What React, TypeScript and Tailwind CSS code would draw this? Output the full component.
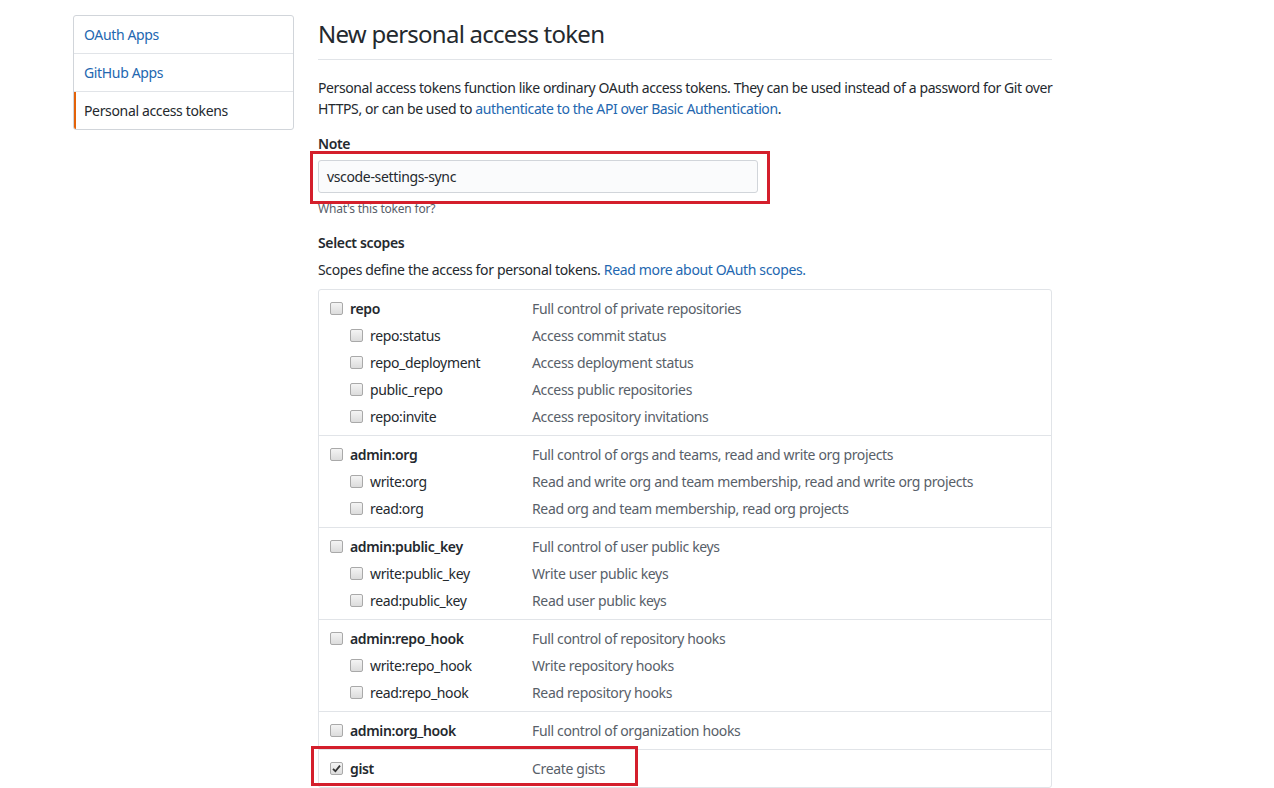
import React from 'react';

type Scope = {
  name: string;
  description: string;
  checked?: boolean;
  children?: { name: string; description: string }[];
};

const scopes: Scope[] = [
  {
    name: 'repo',
    description: 'Full control of private repositories',
    children: [
      { name: 'repo:status', description: 'Access commit status' },
      { name: 'repo_deployment', description: 'Access deployment status' },
      { name: 'public_repo', description: 'Access public repositories' },
      { name: 'repo:invite', description: 'Access repository invitations' },
    ],
  },
  {
    name: 'admin:org',
    description: 'Full control of orgs and teams, read and write org projects',
    children: [
      { name: 'write:org', description: 'Read and write org and team membership, read and write org projects' },
      { name: 'read:org', description: 'Read org and team membership, read org projects' },
    ],
  },
  {
    name: 'admin:public_key',
    description: 'Full control of user public keys',
    children: [
      { name: 'write:public_key', description: 'Write user public keys' },
      { name: 'read:public_key', description: 'Read user public keys' },
    ],
  },
  {
    name: 'admin:repo_hook',
    description: 'Full control of repository hooks',
    children: [
      { name: 'write:repo_hook', description: 'Write repository hooks' },
      { name: 'read:repo_hook', description: 'Read repository hooks' },
    ],
  },
  { name: 'admin:org_hook', description: 'Full control of organization hooks' },
  { name: 'gist', description: 'Create gists', checked: true },
];

const Checkbox: React.FC<{ checked?: boolean }> = ({ checked = false }) => (
  <span className="relative inline-block w-[13px] h-[13px] shrink-0 rounded-[2px] border border-[#a9a9a9] bg-gradient-to-b from-[#f4f4f4] to-[#dcdcdc]">
    {checked && (
      <svg viewBox="0 0 13 13" className="absolute left-[-1px] top-[-1px] w-[13px] h-[13px]">
        <path d="M3 6.8 L5.4 9.2 L10 3.6" fill="none" stroke="#333" strokeWidth="1.8" />
      </svg>
    )}
  </span>
);

const ScopeRow: React.FC<{ name: string; description: string; checked?: boolean; child?: boolean }> = ({
  name,
  description,
  checked,
  child = false,
}) => (
  <div className="flex items-center h-[27px]">
    <div className={`flex items-center w-[213px] ${child ? 'pl-[31px]' : 'pl-[11px]'}`}>
      <Checkbox checked={checked} />
      <span className={`ml-[7px] ${child ? 'text-[#24292e]' : 'font-semibold text-[#24292e]'}`}>{name}</span>
    </div>
    <span className="text-[#586069]">{description}</span>
  </div>
);

export default function App() {
  return (
    <div
      className="w-[1274px] h-[788px] overflow-hidden bg-white text-[14px] tracking-[-0.35px] text-[#24292e] flex"
      style={{ fontFamily: '"Noto Sans", "Open Sans", sans-serif' }}
    >
      {/* sidebar */}
      <nav className="ml-[73px] mt-[15px] w-[221px] self-start border border-[#d1d5da] rounded-[3px] overflow-hidden">
        <a className="flex items-center h-[38px] px-[10px] text-[#2367b0] border-b border-[#e1e4e8]">OAuth Apps</a>
        <a className="flex items-center h-[38px] px-[10px] text-[#2367b0] border-b border-[#e1e4e8]">GitHub Apps</a>
        <a className="flex items-center h-[37px] pl-[8px] border-l-2 border-[#e36209] text-[#24292e]">
          Personal access tokens
        </a>
      </nav>

      {/* main */}
      <main className="ml-[24px] w-[734px] pt-[16px]">
        <h1 className="text-[24px] tracking-[-0.75px] font-normal leading-[36px] pb-[7px] border-b border-[#e1e4e8]">
          New personal access token
        </h1>
        <p className="mt-[17px] leading-[21px] tracking-[-0.4px]">
          <span className="whitespace-nowrap">
            Personal access tokens function like ordinary OAuth access tokens. They can be used instead of a password
            for Git over
          </span>
          <br />
          HTTPS, or can be used to <a className="text-[#2367b0]">authenticate to the API over Basic Authentication</a>.
        </p>

        <div className="mt-[14px]">
          <label className="block font-semibold leading-[21px]">Note</label>
          <div className="relative mt-[6px] w-[440px]">
            <div className="h-[33px] flex items-center px-[8px] bg-[#fafbfc] border border-[#d1d5da] rounded-[3px]">
              vscode-settings-sync
            </div>
            <div className="absolute left-[-8px] top-[-9px] w-[460px] h-[53px] border-[3px] border-[#d41f2c] pointer-events-none" />
          </div>
          <p className="mt-[8px] text-[12px] tracking-[-0.2px] leading-[16px] text-[#586069]">What's this token for?</p>
        </div>

        <h3 className="mt-[15px] font-semibold leading-[21px]">Select scopes</h3>
        <p className="mt-[6px] leading-[21px]">
          Scopes define the access for personal tokens. <a className="text-[#2367b0]">Read more about OAuth scopes.</a>
        </p>

        <div className="mt-[9px] border border-[#e1e4e8] rounded-[3px]">
          {scopes.map((scope, i) => (
            <div
              key={scope.name}
              className={`relative py-[5px] ${i < scopes.length - 1 ? 'border-b border-[#e1e4e8]' : ''}`}
            >
              <ScopeRow name={scope.name} description={scope.description} checked={scope.checked} />
              {scope.children?.map((c) => (
                <ScopeRow key={c.name} name={c.name} description={c.description} child />
              ))}
              {scope.name === 'gist' && (
                <div className="absolute left-[-8px] top-[-4px] w-[327px] h-[40px] border-[3px] border-[#d41f2c] pointer-events-none" />
              )}
            </div>
          ))}
        </div>
      </main>
    </div>
  );
}
